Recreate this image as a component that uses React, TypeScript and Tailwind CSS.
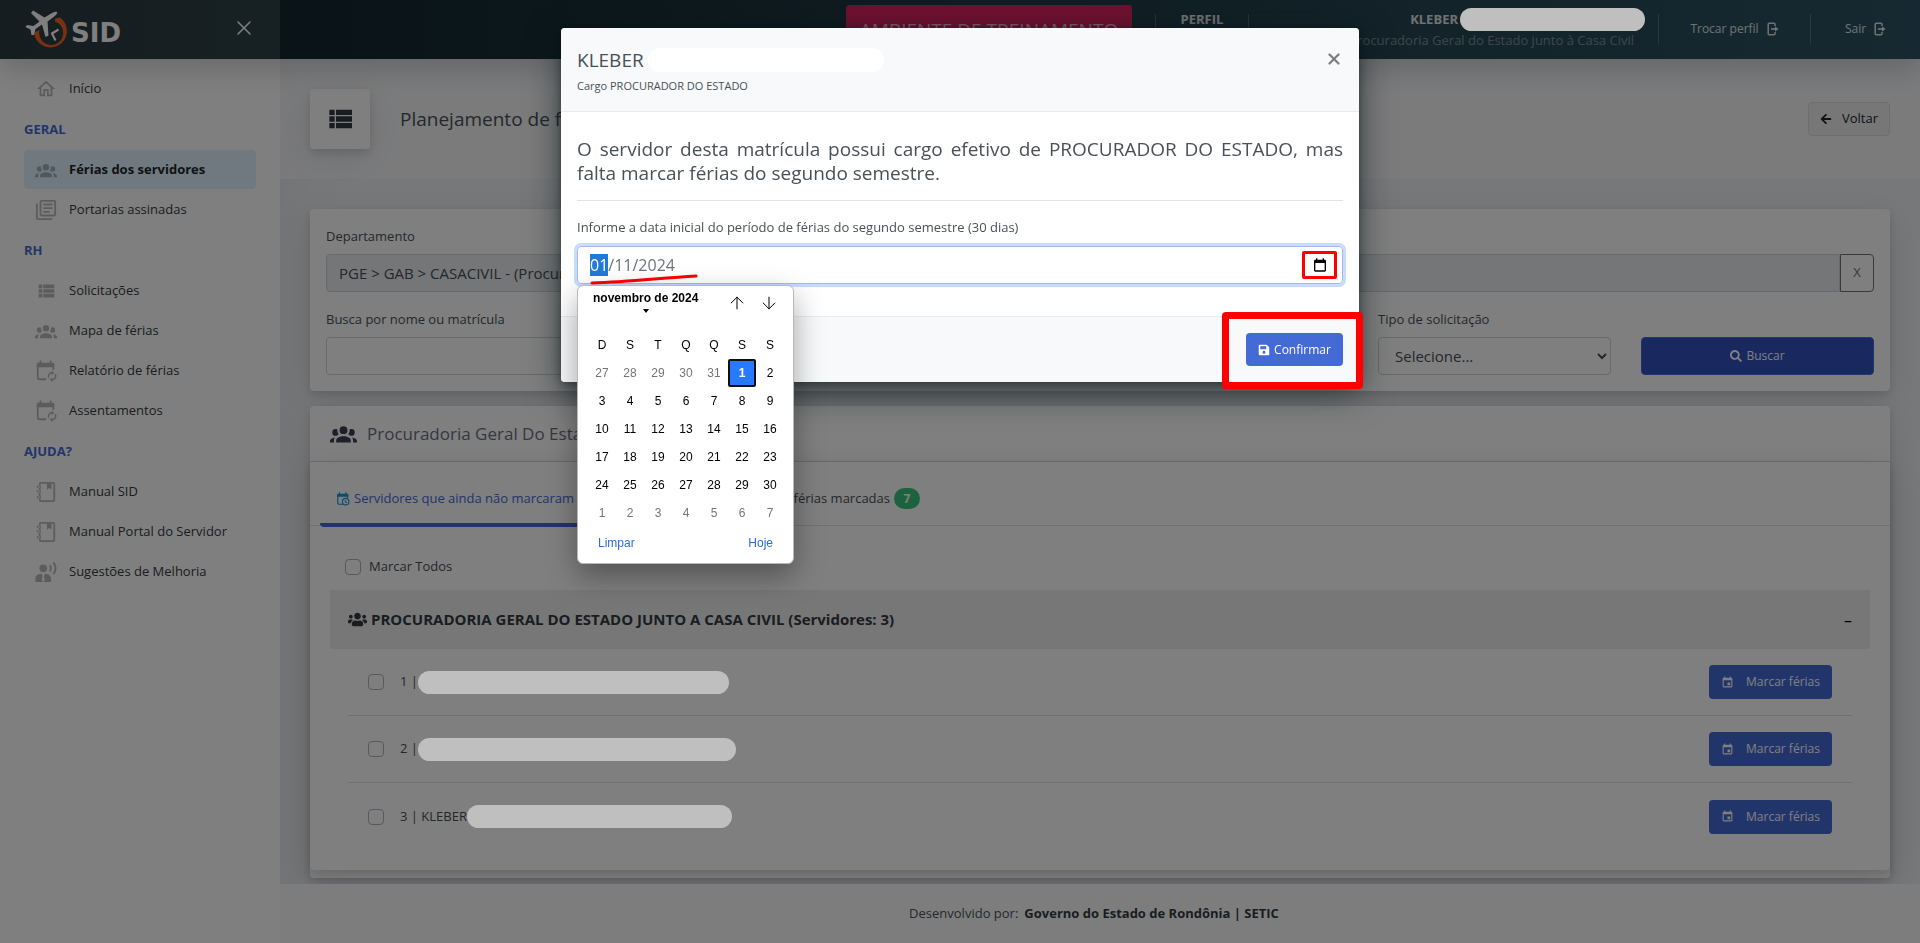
import React, { useEffect, useRef } from 'react';
import { FaArrowLeft, FaSave, FaSearch, FaUsers } from 'react-icons/fa';
import { ArrowDown, ArrowUp, X } from 'lucide-react';

const icons: Record<string, string> = {
  home: 'M12 5.69L17 10.19V18H15V12H9V18H7V10.19L12 5.69M12 3L2 12H5V20H11V14H13V20H19V12H22L12 3Z',
  group:
    'M12,5.5A3.5,3.5 0 0,1 15.5,9A3.5,3.5 0 0,1 12,12.5A3.5,3.5 0 0,1 8.5,9A3.5,3.5 0 0,1 12,5.5M5,8C5.56,8 6.08,8.15 6.53,8.42C6.38,9.85 6.8,11.27 7.66,12.38C7.16,13.34 6.16,14 5,14A3,3 0 0,1 2,11A3,3 0 0,1 5,8M19,8A3,3 0 0,1 22,11A3,3 0 0,1 19,14C17.84,14 16.84,13.34 16.34,12.38C17.2,11.27 17.62,9.85 17.47,8.42C17.92,8.15 18.44,8 19,8M5.5,18.25C5.5,16.18 8.41,14.5 12,14.5C15.59,14.5 18.5,16.18 18.5,18.25V20H5.5V18.25M0,20V18.5C0,17.11 1.89,15.94 4.45,15.6C3.86,16.28 3.5,17.22 3.5,18.25V20H0M24,20H20.5V18.25C20.5,17.22 20.14,16.28 19.55,15.6C22.11,15.94 24,17.11 24,18.5V20Z',
  documents:
    'M16,15H9V13H16V15M19,11H9V9H19V11M19,7H9V5H19V7M3,5V21H19V23H3A2,2 0 0,1 1,21V5H3M21,1A2,2 0 0,1 23,3V17C23,18.11 22.11,19 21,19H7A2,2 0 0,1 5,17V3C5,1.89 5.89,1 7,1H21M7,3V17H21V3H7Z',
  list: 'M9,5V9H21V5M9,19H21V15H9M9,14H21V10H9M4,9H8V5H4M4,19H8V15H4M4,14H8V10H4V14Z',
  calendar:
    'M19,19H5V8H19M16,1V3H8V1H6V3H5C3.89,3 3,3.89 3,5V19A2,2 0 0,0 5,21H19A2,2 0 0,0 21,19V5C21,3.89 20.1,3 19,3H18V1M17,12H12V17H17V12Z',
  calendarBlank:
    'M19,20H5V9H19M16,2V4H8V2H6V4H5C3.89,4 3,4.89 3,6V20A2,2 0 0,0 5,22H19A2,2 0 0,0 21,20V6C21,4.89 20.1,4 19,4H18V2',
};

function Icon({ name, className }: { name: string; className?: string }) {
  if (name === 'calendarSync' || name === 'calendarClock') {
    return (
      <svg viewBox="0 0 24 24" className={className} fill="none" stroke="currentColor" aria-hidden="true">
        <path d="M12 21H5a2 2 0 0 1-2-2V5H20v6" strokeWidth="2" />
        <path d="M2 8V4.500A1.500 1.500 0 0 1 3.500 3H5V0.500H7V3H16V0.500H18V3H19.500A1.500 1.500 0 0 1 21 4.500V8Z" fill="currentColor" stroke="none" />
        {name === 'calendarSync' ? (
          <>
            <path d="M15 19.500A4 4 0 0 1 18.500 14M22 15.500A4 4 0 0 1 18.500 21.500" strokeWidth="1.700" />
            <path d="M18 11.500L21 14L18 16.500ZM19 19L16 21.500L19 24Z" fill="currentColor" stroke="none" />
          </>
        ) : (
          <>
            <circle cx="16.500" cy="16.500" r="5.500" strokeWidth="2" />
            <path d="M16 13.500V17L18.500 18.500" strokeWidth="1.800" />
          </>
        )}
      </svg>
    );
  }
  if (name === 'notebook') {
    return (
      <svg viewBox="0 0 24 24" className={className} fill="none" stroke="currentColor" aria-hidden="true">
        <path d="M5 5V3.500A1.500 1.500 0 0 1 6.500 2H19.500A1.500 1.500 0 0 1 21 3.500V20.500A1.500 1.500 0 0 1 19.500 22H6.500A1.500 1.500 0 0 1 5 20.500V19" strokeWidth="2" />
        <path d="M5 7.500V10M5 13V16.500" strokeWidth="2" />
        <path d="M13 2.500H18V9.500L15.500 7.500L13 9.500Z" fill="currentColor" stroke="none" />
        <path d="M2 6.300H6.500M2 11.500H6.500M2 17.700H6.500" strokeWidth="2.200" strokeDasharray="1.800 1" />
      </svg>
    );
  }
  if (name === 'voice') {
    return (
      <svg viewBox="0 0 24 24" className={className} fill="currentColor" aria-hidden="true">
        <circle cx="9" cy="8" r="4.200" />
        <path d="M0.500 23V19C0.500 16 3.500 14.300 7 14L8.200 16L7.500 21L9 23L10.500 21L9.800 16L11 14C14.500 14.300 17.500 16 17.500 19V23Z" />
        <path d="M16 4.500Q18.500 8 16 11.500M20 1.500Q25 8 20 14.500" fill="none" stroke="currentColor" strokeWidth="2" />
      </svg>
    );
  }
  if (name === 'exit') {
    return (
      <svg viewBox="0 0 12 14" className={className} fill="none" stroke="currentColor" aria-hidden="true">
        <path d="M8 4V2.200Q8 1.200 7 1.200H2.200Q1.200 1.200 1.200 2.200V11.800Q1.200 12.800 2.200 12.800H7Q8 12.800 8 11.800V10" strokeWidth="1.500" />
        <path d="M4 7H9" strokeWidth="1.700" />
        <path d="M8 4.200L11.500 7L8 9.800Z" fill="currentColor" stroke="none" />
      </svg>
    );
  }
  return (
    <svg viewBox="0 0 24 24" className={className} fill="currentColor" aria-hidden="true">
      <path d={icons[name]} />
    </svg>
  );
}

function Logo() {
  return (
    <a href="#" className="flex items-center text-white" aria-label="SID">
      <svg viewBox="0 0 46 42" className="h-[42px] w-[46px]" aria-hidden="true">
        <path d="M31 9.500L36 8.500A16.500 16.500 0 1 1 10 23.500L15.500 21A12 12 0 1 0 31 12.500Z" fill="#f26522" />
        <path
          d="M33 3C31 2 28 4 25.500 5.500L20.500 8.500L9 1.500L7 4L15.500 12.500L9.500 17L3 16L1.500 18L6.500 20.500L7.500 26L10 26L11.500 20L18 15.500L21.500 28L24.500 26.500L23.500 12.500L29 8.500C31.500 6.500 34 4.500 33 3Z"
          fill="currentColor"
        />
        <path d="M34.500 20.500L28 24.500L31.500 31.500" fill="none" stroke="currentColor" strokeWidth="2.200" />
      </svg>
      <span className="mt-[6px] pl-px font-['DejaVu_Sans',sans-serif] text-[26px] leading-[30px] font-bold">SID</span>
    </a>
  );
}

const menu = [
  { title: '', items: [{ icon: 'home', label: 'Início' }] },
  {
    title: 'GERAL',
    items: [
      { icon: 'group', label: 'Férias dos servidores', active: true },
      { icon: 'documents', label: 'Portarias assinadas' },
    ],
  },
  {
    title: 'RH',
    items: [
      { icon: 'list', label: 'Solicitações' },
      { icon: 'group', label: 'Mapa de férias' },
      { icon: 'calendarSync', label: 'Relatório de férias' },
      { icon: 'calendarSync', label: 'Assentamentos' },
    ],
  },
  {
    title: 'AJUDA?',
    items: [
      { icon: 'notebook', label: 'Manual SID' },
      { icon: 'notebook', label: 'Manual Portal do Servidor' },
      { icon: 'voice', label: 'Sugestões de Melhoria' },
    ],
  },
];

function Sidebar() {
  return (
    <nav className="w-[280px] shrink-0 bg-white px-6 pt-[10px] shadow-[7px_0_60px_rgba(8,10,37,0.06)]">
      {menu.map((section) => (
        <div key={section.title}>
          {section.title && (
            <h2 className="flex h-[41px] items-center text-[13px] font-bold text-[#446ad6]">{section.title}</h2>
          )}
          <ul>
            {section.items.map((item: { icon: string; label: string; active?: boolean }) => (
              <li key={item.label} className="h-10">
                <a
                  href="#"
                  className={`flex h-[39px] items-center gap-[11px] rounded pl-[10px] text-[13px] ${
                    item.active ? 'bg-[#e0f3ff] font-bold text-[#212529]' : 'text-[#343a40]'
                  }`}
                >
                  <Icon name={item.icon} className="h-6 w-6 p-px text-[#343a40] opacity-35" />
                  {item.label}
                </a>
              </li>
            ))}
          </ul>
        </div>
      ))}
    </nav>
  );
}

// Names are hidden behind these bars, which stay above the backdrop
function Redacted({ className }: { className: string }) {
  return <span className={`relative z-[45] inline-block h-[23px] rounded-full bg-[#bfbfbf] ${className}`} />;
}

function Header() {
  return (
    <header className="relative flex h-[59px] bg-linear-to-r from-[#0f2027] via-[#203a43] to-[#2c5364] text-[13px] text-white/85 shadow-[0_8px_30px_rgba(4,9,20,0.2)]">
      <div className="flex w-[280px] shrink-0 items-center justify-between bg-white/12 pr-6 pl-6">
        <Logo />
        <button type="button" aria-label="Fechar menu" className="-mt-1">
          <X className="h-6 w-6 text-white" strokeWidth={1.5} />
        </button>
      </div>
      <div className="flex flex-1 justify-end">
        <div className="mt-[5px] mr-[23px] h-[50px] w-[286px] shrink-0 rounded bg-[#dc2260] text-center text-[19px] leading-[50px] whitespace-nowrap text-white/75">
          AMBIENTE DE TREINAMENTO
        </div>
        <div className="my-[14px] flex h-[30px] w-[94px] justify-center border-x border-white/20">
          <span className="-mt-1 font-bold">PERFIL</span>
        </div>
        <div className="mt-2 flex w-[409px] flex-col items-end">
          <div className="flex items-center gap-[2px] pr-[13px]">
            <span className="font-bold">KLEBER</span>
            <Redacted className="w-[185px]" />
          </div>
          <span className="pr-6 text-[13px] whitespace-nowrap text-white/40">
            Procuradoria Geral do Estado junto à Casa Civil
          </span>
        </div>
        <div className="my-[14px] flex h-[30px] w-[153px] items-center justify-center border-x border-white/20">
          <button type="button" className="flex items-center gap-2 text-xs">
            Trocar perfil
            <Icon name="exit" className="h-[14px] w-3" />
          </button>
        </div>
        <div className="my-[14px] flex h-[30px] w-[109px] items-center justify-center">
          <button type="button" className="flex items-center gap-2 text-xs">
            Sair
            <Icon name="exit" className="h-[14px] w-3" />
          </button>
        </div>
      </div>
    </header>
  );
}

const cardShadow = 'shadow-[0_8px_35px_rgba(4,9,20,0.1),0_4px_8px_rgba(4,9,20,0.12)]';
const fieldClass = 'h-[38px] w-full rounded border border-[#ced4da] bg-white px-3 text-[15px] text-[#495057]';

function SearchCard() {
  return (
    <section className={`rounded bg-white px-4 pt-[17px] pb-4 text-[13px] text-[#495057] ${cardShadow}`}>
      <label htmlFor="departamento" className="mb-[7px] block leading-[21px]">
        Departamento
      </label>
      <div className="mb-[17px] flex">
        <input
          id="departamento"
          readOnly
          defaultValue="PGE > GAB > CASACIVIL - (Procuradoria Geral do Estado junto à Casa Civil)"
          className="h-[38px] flex-1 rounded-l border border-[#ced4da] bg-[#e9ecef] px-3 text-[15px] text-[#495057]"
        />
        <button type="button" className="w-[34px] rounded-r border border-[#6c757d] text-[#6c757d]">
          X
        </button>
      </div>
      <div className="grid grid-cols-12 items-end gap-x-[30px]">
        <div className="col-span-8">
          <label htmlFor="busca" className="mb-[7px] block leading-[21px]">
            Busca por nome ou matrícula
          </label>
          <input id="busca" className={fieldClass} />
        </div>
        <div className="col-span-2">
          <label htmlFor="tipo" className="mb-[7px] block leading-[21px]">
            Tipo de solicitação
          </label>
          <select id="tipo" className={fieldClass}>
            <option>Selecione...</option>
          </select>
        </div>
        <button
          type="button"
          className="col-span-2 flex h-[38px] items-center justify-center gap-1 rounded border border-[#446ad6] bg-[#3450c0] text-xs text-white"
        >
          <FaSearch className="h-3 w-3" />
          Buscar
        </button>
      </div>
    </section>
  );
}

const servers = [
  { id: 1, name: '', bar: 'w-[311px]' },
  { id: 2, name: '', bar: 'w-[318px]' },
  { id: 3, name: 'KLEBER', bar: 'w-[265px]' },
];

const checkboxClass = 'h-4 w-4 appearance-none rounded border border-[#adb5bd] bg-white';

function ServersCard() {
  return (
    <section className={`mt-[15px] rounded bg-white pb-2 ${cardShadow}`}>
      <h2 className="flex h-[56px] items-center gap-[10px] border-b border-[#d9dbe8] pl-5 text-[17px] text-[#6b6f82]">
        <Icon name="group" className="h-[27px] w-[27px] text-[#3b3e55]" />
        Procuradoria Geral Do Estado Junto À Casa Civil
      </h2>
      <div className={`rounded bg-white pb-5 text-[13px] text-[#495057] ${cardShadow}`}>
        <div className="flex h-16 border-b border-[#dee2e6] pl-[10px]">
          <button
            type="button"
            className="mb-[-2px] flex w-[336px] items-center gap-1 rounded-b-sm border-b-4 border-[#446ad6] pt-3 pl-4 text-left whitespace-nowrap text-[#446ad6]"
          >
            <Icon name="calendarClock" className="h-[14px] w-[14px] shrink-0 text-[#1b96e0]" />
            Servidores que ainda não marcaram férias
          </button>
          <button type="button" className="flex w-[264px] items-center justify-end gap-1 pt-[10px] whitespace-nowrap">
            Servidores com férias marcadas
            <span className="flex h-[21px] w-[26px] items-center justify-center rounded-full bg-[#3ac47d] text-xs font-bold text-white">
              7
            </span>
          </button>
        </div>
        <div className="px-5">
          <label className="flex h-16 items-center gap-2 pt-[18px] pl-[15px]">
            <input type="checkbox" className={checkboxClass} />
            Marcar Todos
          </label>
          <div className="flex h-[59px] items-center justify-between bg-[#efefef] px-[18px] text-[#343a40]">
            <h3 className="flex items-center gap-1 text-[15px] font-bold">
              <FaUsers className="h-[19px] w-[19px]" />
              PROCURADORIA GERAL DO ESTADO JUNTO A CASA CIVIL (Servidores: 3)
            </h3>
            <button type="button" className="text-base text-black">
              –
            </button>
          </div>
          <ul className="mx-[18px] divide-y divide-[#dcdee0]">
            {servers.map((server) => (
              <li key={server.id} className="flex h-[67px] items-center justify-between px-5">
                <label className="flex items-center">
                  <input type="checkbox" className={`mr-4 ${checkboxClass}`} />
                  <span className="whitespace-nowrap">
                    {server.id} | {server.name}
                  </span>
                  <Redacted className={server.bar} />
                </label>
                <button
                  type="button"
                  className="flex h-[34px] w-[123px] items-center justify-center gap-3 rounded bg-[#446ad6] text-xs whitespace-nowrap text-white"
                >
                  <Icon name="calendar" className="h-[13px] w-[13px]" />
                  Marcar férias
                </button>
              </li>
            ))}
          </ul>
        </div>
      </div>
    </section>
  );
}

const weeks = [
  [27, 28, 29, 30, 31, 1, 2],
  [3, 4, 5, 6, 7, 8, 9],
  [10, 11, 12, 13, 14, 15, 16],
  [17, 18, 19, 20, 21, 22, 23],
  [24, 25, 26, 27, 28, 29, 30],
  [1, 2, 3, 4, 5, 6, 7],
];

function isOtherMonth(week: number, day: number) {
  return (week === 0 && day > 20) || (week === 5 && day < 10);
}

function DatePicker() {
  return (
    <div className="absolute top-[39px] left-0 z-10 w-[217px] rounded-md border border-[#b8b8b8] bg-white px-[10px] font-['Liberation_Sans',Arial,sans-serif] text-xs text-black shadow-[0_12px_30px_rgba(0,0,0,0.35)]">
      <div className="flex h-[44px] items-start justify-between pt-1">
        <button type="button" className="flex flex-col items-center pl-[5px] font-bold">
          novembro de 2024
          <span className="mt-[3px] border-x-[3px] border-t-4 border-x-transparent border-t-black" />
        </button>
        <div className="flex gap-3 pt-[3px] pr-1">
          <button type="button" aria-label="Mês anterior">
            <ArrowUp className="h-5 w-5" strokeWidth={1.2} />
          </button>
          <button type="button" aria-label="Próximo mês">
            <ArrowDown className="h-5 w-5" strokeWidth={1.2} />
          </button>
        </div>
      </div>
      <table className="text-center">
        <thead>
          <tr>
            {['D', 'S', 'T', 'Q', 'Q', 'S', 'S'].map((day, index) => (
              <th key={index} className="h-[29px] w-7 p-0 font-normal">
                {day}
              </th>
            ))}
          </tr>
        </thead>
        <tbody>
          {weeks.map((days, week) => (
            <tr key={week}>
              {days.map((day) => {
                const selected = week === 0 && day === 1;
                return (
                  <td key={day} className="p-0">
                    <button
                      type="button"
                      className={`block h-7 w-7 ${
                        selected
                          ? 'rounded-xs border-2 border-[#101010] bg-[#2979ff] font-bold text-white'
                          : isOtherMonth(week, day)
                            ? 'text-[#757575]'
                            : ''
                      }`}
                    >
                      {day}
                    </button>
                  </td>
                );
              })}
            </tr>
          ))}
        </tbody>
      </table>
      <div className="mb-1 flex h-8 items-center justify-between px-[10px] text-[#2a6fd0]">
        <button type="button">Limpar</button>
        <button type="button">Hoje</button>
      </div>
    </div>
  );
}

function VacationModal() {
  const inputRef = useRef<HTMLInputElement>(null);

  useEffect(() => {
    inputRef.current?.focus();
    inputRef.current?.setSelectionRange(0, 2);
  }, []);

  return (
    <div className="fixed inset-x-0 top-0 z-50 flex justify-center pt-7">
      <div
        role="dialog"
        aria-labelledby="modal-title"
        className="w-full max-w-[798px] rounded bg-white text-[#495057] shadow-[0_10px_34px_rgba(4,20,24,0.6),0_2px_10px_rgba(0,0,0,0.35)]"
      >
        <div className="flex h-[84px] items-start justify-between rounded-t border-b border-[#e9ecef] bg-[#f8f9fb] px-4 pt-[18px]">
          <div>
            <h1 id="modal-title" className="flex h-7 items-center gap-1 text-[19px]">
              KLEBER
              <span className="h-6 w-[236px] rounded-full bg-white" />
            </h1>
            <p className="mt-[3px] text-[11px] leading-[18px]">Cargo PROCURADOR DO ESTADO</p>
          </div>
          <button type="button" aria-label="Fechar" className="mt-1 text-[#7f7f7f]">
            <X className="h-[18px] w-[18px]" strokeWidth={3} />
          </button>
        </div>
        <div className="px-4 pt-[25px] pb-8">
          <p className="text-justify text-[19px] leading-6">
            O servidor desta matrícula possui cargo efetivo de PROCURADOR DO ESTADO, mas falta marcar férias do segundo
            semestre.
          </p>
          <hr className="mt-[15px] mb-4 border-[#e2e3e4]" />
          <label htmlFor="data-inicial" className="block pb-2 text-[13px] leading-[21px]">
            Informe a data inicial do período de férias do segundo semestre (30 dias)
          </label>
          <div className="relative">
            <input
              id="data-inicial"
              ref={inputRef}
              defaultValue="01/11/2024"
              className="block h-[38px] w-full rounded border border-[#a4b8ee] px-3 text-base text-[#6c757d] ring-3 ring-[#c8dcfd] outline-none selection:bg-[#2179da] selection:text-white"
            />
            <button
              type="button"
              aria-label="Abrir calendário"
              className="absolute top-[5px] right-[6px] flex h-7 w-[35px] items-center justify-center rounded-xs border-3 border-[#ff0000] text-black"
            >
              <Icon name="calendarBlank" className="h-4 w-4" />
            </button>
            <svg className="absolute top-[27px] left-[13px] h-3 w-[108px]" viewBox="0 0 108 12" aria-hidden="true">
              <path d="M2 10C40 9 70 5 106 3" fill="none" stroke="#ff0000" strokeWidth="3" strokeLinecap="round" />
            </svg>
            <DatePicker />
          </div>
        </div>
        <div className="relative flex h-[66px] items-center justify-end rounded-b border-t border-[#e9ecef] bg-[#f8f9fb] px-4">
          <button
            type="button"
            className="flex h-[33px] w-[97px] items-center justify-center gap-1 rounded bg-[#446ad6] text-xs text-white"
          >
            <FaSave className="h-3 w-3" />
            Confirmar
          </button>
          <div className="pointer-events-none absolute -top-[5px] -right-1 h-[77px] w-[141px] rounded border-7 border-[#ff0000]" />
        </div>
      </div>
    </div>
  );
}

export default function App() {
  return (
    <div className="flex min-h-screen flex-col bg-[#eff1f5] font-['Open_Sans','Noto_Sans',sans-serif]">
      <Header />
      <div className="flex flex-1">
        <Sidebar />
        <div className="flex flex-1 flex-col">
          <main className="flex-1 px-[30px]">
            <div className="-mx-[30px] mb-[30px] flex h-[120px] items-center justify-between bg-white/45 px-[30px]">
              <div className="flex items-center gap-[30px]">
                <div className={`flex h-[60px] w-[60px] items-center justify-center rounded bg-white ${cardShadow}`}>
                  <Icon name="list" className="h-8 w-8 text-[#343a40]" />
                </div>
                <h1 className="text-[19px] text-[#495057]">Planejamento de férias</h1>
              </div>
              <button
                type="button"
                className="flex h-[34px] w-[82px] items-center justify-center gap-[10px] rounded border border-[#dcdcdc] bg-[#efefef] text-[13px] text-[#212529]"
              >
                <FaArrowLeft className="h-3 w-3" />
                Voltar
              </button>
            </div>
            <SearchCard />
            <ServersCard />
          </main>
          <footer className="mt-[6px] flex h-[59px] items-center justify-center gap-[6px] bg-[#fafbfc] pr-3 text-[13px] text-[#495057]">
            Desenvolvido por: <strong className="text-[#343a40]">Governo do Estado de Rondônia | SETIC</strong>
          </footer>
        </div>
      </div>
      <div className="fixed inset-0 z-40 bg-black/50" />
      <VacationModal />
    </div>
  );
}
